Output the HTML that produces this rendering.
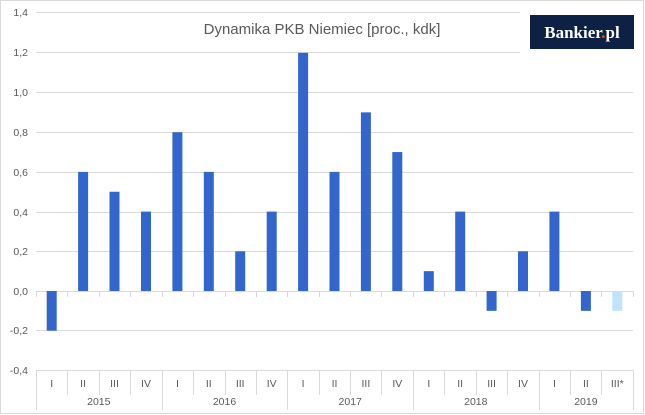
<!DOCTYPE html><html><head><style>body{margin:0;background:#fff}svg{display:block}text{font-family:"Liberation Sans",sans-serif}</style></head><body>
<svg width="645" height="415" viewBox="0 0 645 415">
<rect x="0.5" y="0.5" width="643" height="413" fill="#fff" stroke="#d9d9d9"/>
<g stroke="#d9d9d9" stroke-width="1">
<line x1="36" y1="12.5" x2="633" y2="12.5"/><line x1="36" y1="52.5" x2="633" y2="52.5"/><line x1="36" y1="92.5" x2="633" y2="92.5"/><line x1="36" y1="132.5" x2="633" y2="132.5"/><line x1="36" y1="172.5" x2="633" y2="172.5"/><line x1="36" y1="212.5" x2="633" y2="212.5"/><line x1="36" y1="251.5" x2="633" y2="251.5"/><line x1="36" y1="330.5" x2="633" y2="330.5"/><line x1="36" y1="370.5" x2="633" y2="370.5"/><line x1="36" y1="291.5" x2="633" y2="291.5"/>
</g>
<rect x="520" y="12" width="120" height="42" fill="#fff"/>
<g font-size="10.5" fill="#595959" text-anchor="end">
<text x="28" y="16">1,4</text><text x="28" y="56">1,2</text><text x="28" y="96">1,0</text><text x="28" y="136">0,8</text><text x="28" y="176">0,6</text><text x="28" y="216">0,4</text><text x="28" y="255">0,2</text><text x="28" y="295">0,0</text><text x="28" y="334">-0,2</text><text x="28" y="374">-0,4</text>
</g>
<text x="322" y="34" font-size="15" fill="#595959" text-anchor="middle">Dynamika PKB Niemiec [proc., kdk]</text>
<rect x="530" y="15" width="104" height="34" fill="#0d2145"/>
<text x="582" y="38" font-size="17" font-weight="bold" fill="#fff" text-anchor="middle" style="font-family:'Liberation Serif',serif">Bankier<tspan fill="#e8532b">.</tspan>pl</text>
<g stroke="#d9d9d9">
<line x1="36.5" y1="291" x2="36.5" y2="297"/><line x1="67.5" y1="291" x2="67.5" y2="297"/><line x1="99.5" y1="291" x2="99.5" y2="297"/><line x1="130.5" y1="291" x2="130.5" y2="297"/><line x1="162.5" y1="291" x2="162.5" y2="297"/><line x1="193.5" y1="291" x2="193.5" y2="297"/><line x1="225.5" y1="291" x2="225.5" y2="297"/><line x1="256.5" y1="291" x2="256.5" y2="297"/><line x1="287.5" y1="291" x2="287.5" y2="297"/><line x1="319.5" y1="291" x2="319.5" y2="297"/><line x1="350.5" y1="291" x2="350.5" y2="297"/><line x1="381.5" y1="291" x2="381.5" y2="297"/><line x1="413.5" y1="291" x2="413.5" y2="297"/><line x1="444.5" y1="291" x2="444.5" y2="297"/><line x1="476.5" y1="291" x2="476.5" y2="297"/><line x1="507.5" y1="291" x2="507.5" y2="297"/><line x1="539.5" y1="291" x2="539.5" y2="297"/><line x1="570.5" y1="291" x2="570.5" y2="297"/><line x1="601.5" y1="291" x2="601.5" y2="297"/><line x1="633.5" y1="291" x2="633.5" y2="297"/>
<line x1="36.5" y1="370" x2="36.5" y2="410"/><line x1="67.5" y1="370" x2="67.5" y2="395"/><line x1="99.5" y1="370" x2="99.5" y2="395"/><line x1="130.5" y1="370" x2="130.5" y2="395"/><line x1="162.5" y1="370" x2="162.5" y2="410"/><line x1="193.5" y1="370" x2="193.5" y2="395"/><line x1="225.5" y1="370" x2="225.5" y2="395"/><line x1="256.5" y1="370" x2="256.5" y2="395"/><line x1="287.5" y1="370" x2="287.5" y2="410"/><line x1="319.5" y1="370" x2="319.5" y2="395"/><line x1="350.5" y1="370" x2="350.5" y2="395"/><line x1="381.5" y1="370" x2="381.5" y2="395"/><line x1="413.5" y1="370" x2="413.5" y2="410"/><line x1="444.5" y1="370" x2="444.5" y2="395"/><line x1="476.5" y1="370" x2="476.5" y2="395"/><line x1="507.5" y1="370" x2="507.5" y2="395"/><line x1="539.5" y1="370" x2="539.5" y2="410"/><line x1="570.5" y1="370" x2="570.5" y2="395"/><line x1="601.5" y1="370" x2="601.5" y2="395"/><line x1="633.5" y1="370" x2="633.5" y2="410"/>
</g>
<g fill="#3366cc">
<rect x="46.7" y="291" width="10" height="39.7"/>
<rect x="78.1" y="171.9" width="10" height="119.1"/>
<rect x="109.5" y="191.75" width="10" height="99.25"/>
<rect x="141" y="211.6" width="10" height="79.4"/>
<rect x="172.4" y="132.2" width="10" height="158.8"/>
<rect x="203.8" y="171.9" width="10" height="119.1"/>
<rect x="235.2" y="251.3" width="10" height="39.7"/>
<rect x="266.7" y="211.6" width="10" height="79.4"/>
<rect x="298.1" y="52.8" width="10" height="238.2"/>
<rect x="329.5" y="171.9" width="10" height="119.1"/>
<rect x="360.9" y="112.35" width="10" height="178.65"/>
<rect x="392.3" y="152.05" width="10" height="138.95"/>
<rect x="423.8" y="271.15" width="10" height="19.85"/>
<rect x="455.2" y="211.6" width="10" height="79.4"/>
<rect x="486.6" y="291" width="10" height="19.85"/>
<rect x="518" y="251.3" width="10" height="39.7"/>
<rect x="549.4" y="211.6" width="10" height="79.4"/>
<rect x="580.9" y="291" width="10" height="19.85"/>
<rect x="612.3" y="291" width="10" height="19.85" fill="#bfe3fb"/>
</g>
<g font-size="10.5" fill="#595959" text-anchor="middle">
<text x="51.7" y="387">I</text><text x="83.1" y="387">II</text><text x="114.5" y="387">III</text><text x="146" y="387">IV</text>
<text x="177.4" y="387">I</text><text x="208.8" y="387">II</text><text x="240.2" y="387">III</text><text x="271.7" y="387">IV</text>
<text x="303.1" y="387">I</text><text x="334.5" y="387">II</text><text x="365.9" y="387">III</text><text x="397.3" y="387">IV</text>
<text x="428.8" y="387">I</text><text x="460.2" y="387">II</text><text x="491.6" y="387">III</text><text x="523" y="387">IV</text>
<text x="554.4" y="387">I</text><text x="585.9" y="387">II</text><text x="617.3" y="387">III*</text>
<text x="98.8" y="405">2015</text><text x="224.5" y="405">2016</text><text x="350.2" y="405">2017</text><text x="475.8" y="405">2018</text><text x="585.9" y="405">2019</text>
</g>
</svg></body></html>
